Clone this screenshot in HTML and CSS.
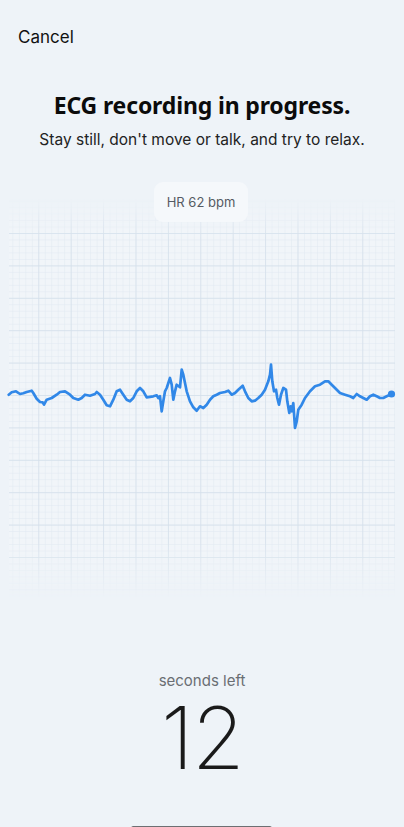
FILE: index.html
```html
<!DOCTYPE html>
<html>
<head>
<meta charset="utf-8">
<link rel="stylesheet" href="styles.css">
</head>
<body>
<div class="screen">
  <header class="topbar"><span class="cancel">Cancel</span></header>
  <section class="intro">
    <h1 class="title">ECG recording in progress.</h1>
    <p class="subtitle">Stay still, don't move or talk, and try to relax.</p>
  </section>
  <section class="chart">
    <div class="pill">HR 62 bpm</div>
    <svg class="ecg" width="404" height="400" viewBox="0 200 404 400" xmlns="http://www.w3.org/2000/svg">
      <defs>
        <pattern id="minor" x="5.9" y="1.72" width="6.48" height="6.48" patternUnits="userSpaceOnUse">
          <path d="M0 0H6.48M0 0V6.48" fill="none" stroke="#e0e8f1" stroke-width="1"/>
        </pattern>
        <pattern id="major" x="5.9" y="8.2" width="32.4" height="32.4" patternUnits="userSpaceOnUse">
          <path d="M0 0H32.4M0 0V32.4" fill="none" stroke="#d4dfea" stroke-width="1.4"/>
        </pattern>
        <linearGradient id="fade" x1="0" y1="200" x2="0" y2="600" gradientUnits="userSpaceOnUse">
          <stop offset="0" stop-color="#fff" stop-opacity="0"/>
          <stop offset="0.1" stop-color="#fff" stop-opacity="1"/>
          <stop offset="0.86" stop-color="#fff" stop-opacity="1"/>
          <stop offset="1" stop-color="#fff" stop-opacity="0"/>
        </linearGradient>
        <mask id="fadeMask" maskUnits="userSpaceOnUse" x="0" y="200" width="404" height="400">
          <rect x="0" y="200" width="404" height="400" fill="url(#fade)"/>
        </mask>
      </defs>
      <g mask="url(#fadeMask)">
        <rect x="9" y="200" width="386" height="400" fill="#f1f5f9"/>
        <rect x="9" y="200" width="386" height="400" fill="url(#minor)"/>
        <rect x="9" y="200" width="386" height="400" fill="url(#major)"/>
      </g>
      <polyline class="trace" points="8.7,396.7 11.7,394.3 16,393.3 20,396 23.3,395.3 26.7,394 31.7,392.7 33.3,395 36.7,400.7 40,404 42.7,404.3 44,406.7 46.7,401.7 51.7,400 56.7,396.7 60,394 65,393.3 70,396.7 73.3,400 78.3,401.7 81.7,400 85,396.7 90,397.7 95,396 96.7,394 100,396.7 103.3,401.7 106.7,407.3 110,408.3 113.3,401.7 116.7,393.3 120,391.7 123.3,396.7 126.7,401.7 130,403.3 133.3,400 136.7,393.3 140,390 143.3,393.3 146.7,399.3 153.3,398.3 156.7,397.3 158.3,400 160,398.3 161.7,413.3 163.3,403.3 165,393.3 166.7,390 170,380 171.7,386.7 173.3,401.7 175,393.3 176.7,386.7 180,389.3 181.7,371.7 183.3,376.7 186.7,393.3 190,403.3 193.3,409.3 196.7,412.7 200,408.3 203.3,410 206.7,406.7 210,401.7 213.3,398.3 216.7,396.7 220,395 225,394 228.3,392.7 231.7,396.7 235,395 238.3,391.7 242.7,387.7 245,393.3 248.3,400 251.7,403.3 255,402.7 258.3,400 261.7,396.7 265,391.7 268.3,383.3 270,376.7 271,366.7 272.3,383.3 274,393.3 276,391.7 277.3,400 279,406.7 281,396.7 283.3,390 286,391.7 287.3,403.3 289.3,415 290.7,408.3 292,413.3 293.3,405 295,430 296.7,423.3 298.3,411.7 301.7,406.7 305,400 310,393.3 315,388.3 320,386.7 325,383.3 328.3,383.3 331.7,386.7 335,390 340,395 345,396.7 350,398.3 353.3,400 356.7,396 360,398.3 363.3,400 366.7,401.7 370,398.3 373.3,396.7 376.7,398.3 380,400 383.3,400 386.7,398.3 391.7,396"/>
      <circle cx="391.5" cy="396" r="3.6" fill="#3188e8"/>
    </svg>
  </section>
  <section class="timer">
    <div class="timer-label">seconds left</div>
    <div class="timer-value">12</div>
  </section>
  <div class="home-indicator"></div>
</div>
</body>
</html>
```
FILE: styles.css
```css
html, body {
  margin: 0;
  padding: 0;
  background: #eef3f8;
}
.screen {
  width: 404px;
  height: 827px;
  overflow: hidden;
  position: relative;
  display: flex;
  flex-direction: column;
  font-family: Inter, "Liberation Sans", sans-serif;
  color: #111;
}
.topbar {
  padding: 26px 0 0 18px;
  height: 24px;
}
.cancel {
  font-size: 17px;
  line-height: 22px;
  color: #111;
}
.intro {
  margin-top: 40px;
  text-align: center;
}
.title {
  margin: 0;
  font-family: "Noto Sans", "Open Sans", sans-serif;
  font-weight: 700;
  font-size: 23px;
  line-height: 30px;
  color: #0b0b0b;
  letter-spacing: -0.15px;
}
.subtitle {
  margin: 10px 0 0;
  font-size: 15.5px;
  line-height: 20px;
  color: #222;
}
.chart {
  margin-top: 32px;
  display: flex;
  flex-direction: column;
  align-items: center;
}
.pill {
  position: relative;
  z-index: 1;
  width: 94px;
  height: 40px;
  border-radius: 9px;
  background: #f5f8fb;
  font-size: 13px;
  line-height: 40px;
  color: #555b63;
  text-align: center;
  margin-bottom: -24px;
  transform: translateX(-1px);
}
.ecg {
  display: block;
}
.trace {
  fill: none;
  stroke: #3188e8;
  stroke-width: 2.7;
  stroke-linejoin: round;
  stroke-linecap: round;
}
.timer {
  margin-top: 73px;
  text-align: center;
}
.timer-label {
  font-size: 15px;
  line-height: 20px;
  color: #6a6e73;
}
.timer-value {
  margin-top: 14px;
  font-size: 86px;
  font-weight: 200;
  line-height: 66px;
  color: #1a1a1a;
  letter-spacing: -2px;
}
.home-indicator {
  position: absolute;
  left: 131px;
  bottom: -4px;
  width: 141px;
  height: 5px;
  border-radius: 3px;
  background: #6d6f73;
}
```
